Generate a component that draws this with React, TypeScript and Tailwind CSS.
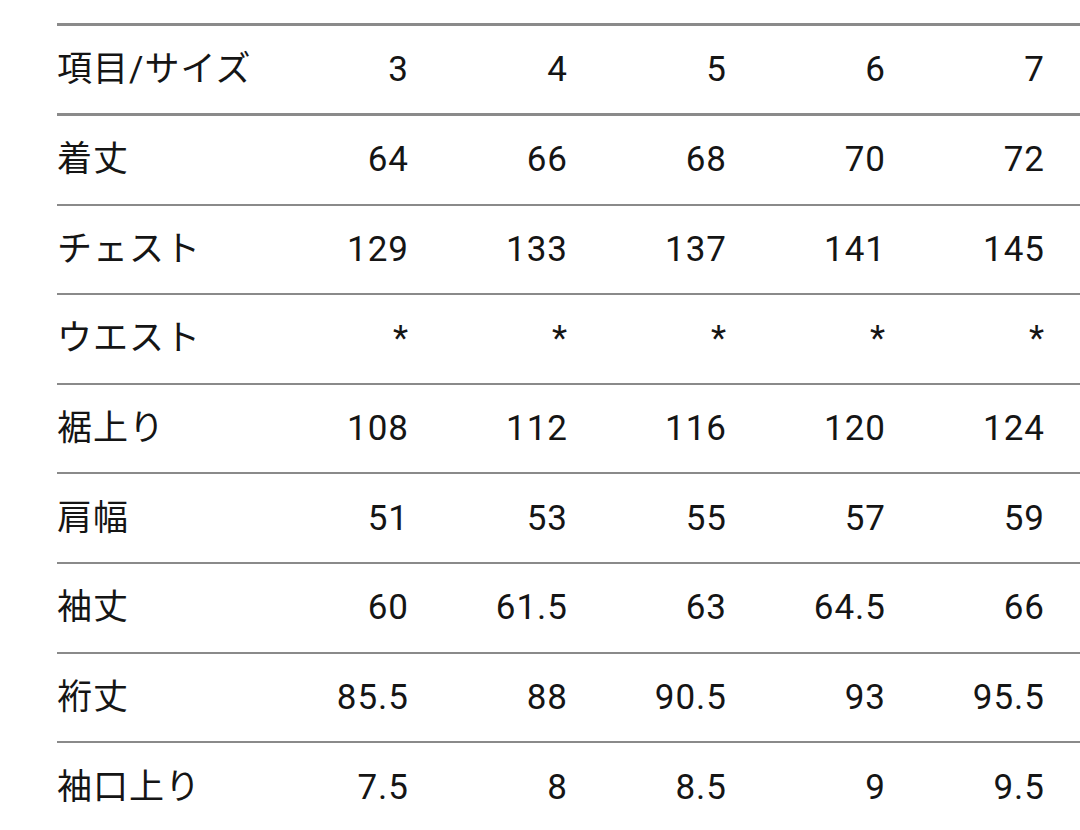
const HEAD = ["3", "4", "5", "6", "7"];

const ROWS: [string, string[]][] = [
  ["着丈", ["64", "66", "68", "70", "72"]],
  ["チェスト", ["129", "133", "137", "141", "145"]],
  ["ウエスト", ["*", "*", "*", "*", "*"]],
  ["裾上り", ["108", "112", "116", "120", "124"]],
  ["肩幅", ["51", "53", "55", "57", "59"]],
  ["袖丈", ["60", "61.5", "63", "64.5", "66"]],
  ["裄丈", ["85.5", "88", "90.5", "93", "95.5"]],
  ["袖口上り", ["7.5", "8", "8.5", "9", "9.5"]],
];

function Row({ label, values, className }: { label: string; values: string[]; className: string }) {
  return (
    <div className={`flex items-center ${className}`}>
      <div className="w-[193px] shrink-0 whitespace-nowrap">{label}</div>
      {values.map((v, i) => (
        <div key={i} className="w-[159px] shrink-0 whitespace-nowrap text-right">
          {v}
        </div>
      ))}
    </div>
  );
}

export default function App() {
  return (
    <div
      className="h-[830px] w-[1080px] overflow-hidden bg-white pl-[57px] pt-[23px] text-[35px] leading-none tracking-[1px] text-[#151515]"
      style={{ fontFamily: 'Roboto, "Noto Sans CJK JP", sans-serif' }}
    >
      <div className="border-t-[3px] border-[#8a8a8a]">
        <Row label="項目/サイズ" values={HEAD} className="h-[90px] border-b-[3px] border-[#8a8a8a]" />
        {ROWS.map(([label, values], i) => (
          <Row
            key={label}
            label={label}
            values={values}
            className={`h-[89.6px] ${i < ROWS.length - 1 ? "border-b-2 border-[#8a8a8a]" : ""}`}
          />
        ))}
      </div>
    </div>
  );
}
